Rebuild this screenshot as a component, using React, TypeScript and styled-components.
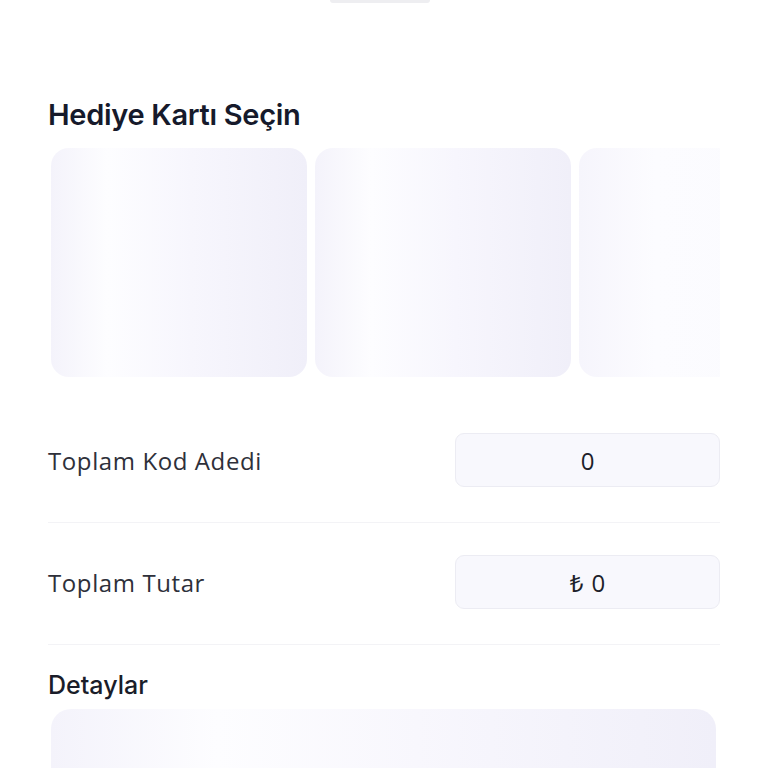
import React from "react";
import styled, { createGlobalStyle } from "styled-components";

const GlobalStyle = createGlobalStyle`
  body {
    margin: 0;
    background: #ffffff;
    font-family: "Inter", "Noto Sans", sans-serif;
    color: #1a1d29;
  }
`;

const Page = styled.div`
  display: flex;
  flex-direction: column;
  padding: 0 48px;
`;

const TopHandle = styled.div`
  align-self: center;
  width: 100px;
  height: 3px;
  margin-left: -8px;
  border-radius: 0 0 50px 50px;
  background: #eeeef1;
`;

const Heading = styled.h2`
  margin: 92px 0 0;
  font-size: 29px;
  font-weight: 600;
  letter-spacing: -0.3px;
  color: #161a2b;
  line-height: 40px;
`;

const Carousel = styled.div`
  display: flex;
  gap: 8px;
  margin-top: 13px;
  padding-left: 3px;
  overflow: hidden;
`;

interface SkeletonProps {
  $light?: boolean;
}

const CardSkeleton = styled.div<SkeletonProps>`
  flex: 0 0 256px;
  height: 229px;
  border-radius: 18px;
  background: ${(p) =>
    p.$light
      ? "linear-gradient(90deg, #f6f5fc 0%, #fcfcff 30%, #fbfbfe 70%, #f8f7fd 100%)"
      : "linear-gradient(90deg, #f4f3fb 0%, #fdfdff 22%, #f7f6fd 55%, #f0eff9 100%)"};
`;

const Row = styled.div`
  display: flex;
  align-items: center;
  justify-content: space-between;
  padding: 32px 0 35px;
  border-bottom: 1.5px solid #f3f3f6;
`;

const FirstRow = styled(Row)`
  margin-top: 24px;
`;

const Label = styled.span`
  font-family: "Open Sans", "Noto Sans", sans-serif;
  font-size: 24px;
  font-weight: 400;
  letter-spacing: 0.6px;
  color: #2e303a;
`;

const ValueBox = styled.div`
  display: flex;
  align-items: center;
  justify-content: center;
  box-sizing: border-box;
  width: 265px;
  height: 54px;
  border-radius: 9px;
  border: 1.5px solid #ececf3;
  background: #f8f8fd;
  font-family: "Open Sans", "Noto Sans", sans-serif;
  font-size: 24px;
  color: #1d1f2a;
  gap: 8px;
`;

const SubHeading = styled.h3`
  margin: 24px 0 0;
  font-size: 25px;
  font-weight: 500;
  color: #1a1d29;
  line-height: 32px;
`;

const DetailSkeleton = styled.div`
  margin: 8px 4px 0 3px;
  height: 120px;
  border-radius: 20px;
  background: linear-gradient(90deg, #f4f3fb 0%, #fdfdff 25%, #f8f7fd 55%, #f0eff9 100%);
`;

const App = (): JSX.Element => {
  return (
    <>
      <GlobalStyle />
      <Page>
        <TopHandle />
        <Heading>Hediye Kartı Seçin</Heading>
        <Carousel>
          <CardSkeleton />
          <CardSkeleton />
          <CardSkeleton $light />
        </Carousel>
        <FirstRow>
          <Label>Toplam Kod Adedi</Label>
          <ValueBox>0</ValueBox>
        </FirstRow>
        <Row>
          <Label>Toplam Tutar</Label>
          <ValueBox>
            <span>₺</span>
            <span>0</span>
          </ValueBox>
        </Row>
        <SubHeading>Detaylar</SubHeading>
        <DetailSkeleton />
      </Page>
    </>
  );
};

export default App;
